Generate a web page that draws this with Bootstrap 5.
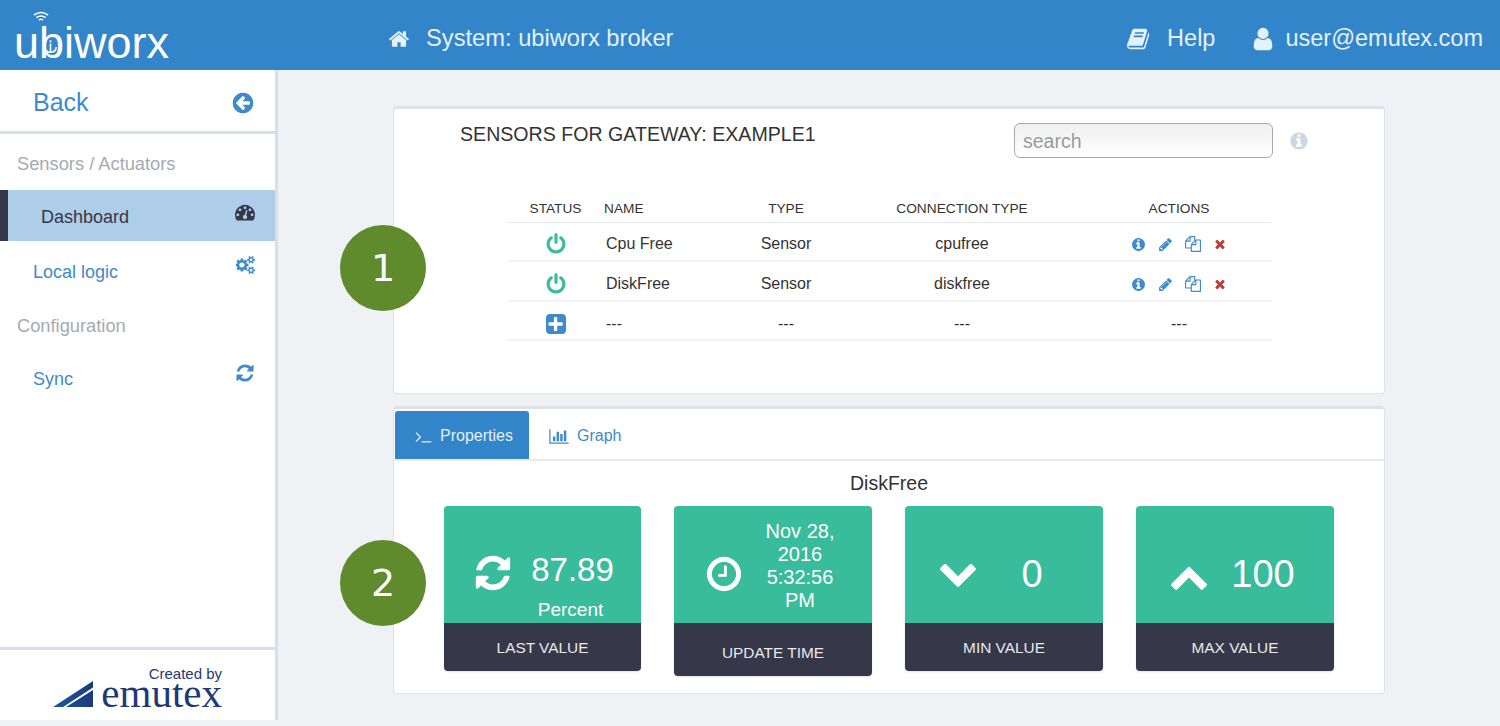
<!DOCTYPE html>
<html lang="en">
<head>
    <meta charset="UTF-8">
    <meta name="viewport" content="width=device-width, initial-scale=1">
    <title>ubiworx broker</title>
    <link href="https://cdn.jsdelivr.net/npm/bootstrap@5.3.0/dist/css/bootstrap.min.css" rel="stylesheet">
    <style>
        html, body { height: 726px; overflow: hidden; }
        body { background: #eef2f5; font-family: "Liberation Sans", Arial, sans-serif; color: #333; }
        .ico { display: block; fill: currentColor; flex: none; }

        /* Barra superior */
        .top-bar { height: 70px; background: #3385c9; color: #e4f0fa; padding: 7px 17px 0 15px; font-size: 23.5px; flex-wrap: nowrap; }
        .top-system { font-size: 23.7px; }
        .logo-box { width: 373px; height: 63px; position: relative; }
        .logo-text { position: absolute; left: -1px; top: 10px; font-size: 45px; line-height: 52px; color: #fff; }
        .logo-wifi { position: absolute; left: 17px; top: 4px; }
        .logo-anchor { position: absolute; left: 28px; top: 32px; }
        .top-help { margin-right: 35px; }
        .user-ico { margin-right: 9px; }

        /* Barra lateral */
        .side-bar { width: 278px; height: 650px; background: #fff; border-right: 3px solid #d5e0e8; }
        .side-back { height: 64px; border-bottom: 3px solid #d5e0e8; padding: 4px 20px 0 33px; font-size: 25px; color: #3f8acb; }
        .side-head { height: 53px; padding: 3px 0 0 17px; font-size: 18.3px; color: #a3abb3; }
        .side-first { height: 56px; }
        .side-link { height: 53px; padding: 0 20px 0 33px; font-size: 18px; color: #3f8acb; }
        .side-link .ico { margin-top: -8px; }
        .side-cogs { padding-right: 18px; padding-top: 1px; }
        .side-link.side-cogs .ico { margin-top: -15px; }
        .side-sync { height: 54px; margin-top: 1px; }
        .side-link.side-sync .ico { margin-top: -12px; }
        .side-active { height: 51px; margin-bottom: 4px; background: #aecde9; border-left: 8px solid #36384a; padding-left: 33px; color: #36384a; }
        .side-active span { margin-top: 3px; }
        .side-foot { height: 73px; border-top: 3px solid #d5e0e8; padding: 16px 53px 0 0; color: #1c3a75; }
        .made-by { font-size: 15px; line-height: 15px; text-align: right; }
        .made-wedge { margin-top: 0; }
        .made-name { font-family: "Liberation Serif", "Times New Roman", serif; font-size: 41px; line-height: 24px; }

        /* Paneles */
        .main-area { padding: 36px 0 0 115px; }
        .panel-box { width: 992px; height: 288px; margin-bottom: 12px; border: 1px solid #dde3e8; border-top-width: 3px; border-radius: 4px; background: #fff; position: relative; }
        .panel-title { position: absolute; left: 66px; top: 12px; font-size: 19.6px; line-height: 26px; }
        .search-box { width: 259px; height: 35px; padding: 2px 8px 0; border: 1px solid #aaa; border-radius: 6px; background: linear-gradient(#f0f0f0, #fff); font-size: 19.5px; color: #333; }
        .search-box::placeholder { color: #9a9a9a; }
        .search-row { padding: 14px 0 0 620px; }
        .search-row .ico { color: #c9d8e3; margin-left: 16px; }
        .sensor-wrap { width: 764px; margin: 40px 0 0 113px; }
        .sensor-table { table-layout: fixed; margin: 0; font-size: 16px; }
        .sensor-table th { height: 24px; padding: 0; font-size: 13.7px; font-weight: 400; text-align: center; color: #333; border-bottom: 1px solid #e6e9ec; vertical-align: middle; }
        .sensor-table td { height: 39px; padding: 6px 0 0; text-align: center; color: #333; border-bottom: 2px solid #f1f3f5; vertical-align: middle; }
        .sensor-table tbody tr:nth-child(2) td { height: 40px; }
        .sensor-table .cell-left { text-align: left; padding-left: 2px; }
        .sensor-table .head-left { text-align: left; }
        .sensor-table .cell-act { padding-left: 6px; }
        .green-ico { color: #38bc9c; }
        .blue-ico { color: #3f8acb; }
        .red-ico { color: #b8403a; }
        .act-row { gap: 12px; }

        /* Pestañas */
        .tab-row { height: 50px; margin: 2px 0 0 1px; border-bottom: 2px solid #e9ecef; flex-wrap: nowrap; }
        .tab-item { height: 48px; padding: 2px 17px 0 20px; font-size: 16px; color: #3f8acb; border-radius: 3px 3px 0 0; }
        .tab-on { width: 134px; background: #3385c9; color: #e4f0fa; }
        .metric-name { height: 45px; padding-top: 10px; font-size: 19.5px; line-height: 24px; text-align: center; }
        .metric-row { padding-left: 50px; gap: 33px; align-items: flex-start; }
        .metric-box { width: 198px; border-radius: 4px; overflow: hidden; box-shadow: 0 1px 2px rgba(0,0,0,.12); }
        .metric-box:first-child { width: 197px; }
        .metric-top { height: 117px; background: #38bc9c; color: #fff; position: relative; }
        .metric-label { height: 48px; padding-top: 2px; background: #36384a; color: #e8e8ea; font-size: 15.4px; }
        .label-tall { height: 53px; padding-top: 7px; }
        .metric-ico { position: absolute; }
        .ico-sync { left: 29px; top: 47px; }
        .ico-clock { left: 30px; top: 48px; }
        .ico-down { left: 33px; top: 46px; }
        .ico-up { left: 33px; top: 50px; }
        .metric-num { position: absolute; left: 60px; right: 0; text-align: center; top: 42px; line-height: 44px; }
        .num-small { font-size: 33px; }
        .num-big { font-size: 38px; top: 46px; left: 56px; }
        .metric-unit { position: absolute; left: 56px; right: 0; top: 92px; font-size: 19px; line-height: 24px; text-align: center; }
        .metric-date { position: absolute; left: 71px; width: 110px; top: 14px; font-size: 20px; line-height: 23px; text-align: center; }

        /* Marcas numeradas sobre los paneles */
        .num-mark { position: absolute; left: -54px; top: 116px; width: 86px; height: 86px; border-radius: 50%; background: #5f8b2d; color: #fff; font-family: "DejaVu Sans", sans-serif; font-size: 38px; }
        .mark-two { top: 131px; }
    </style>
</head>
<body>

<svg width="0" height="0" class="position-absolute">
    <symbol id="i-home" viewBox="0 0 1792 1792"><path d="M1472 992v480q0 26-19 45t-45 19h-384v-384h-256v384h-384q-26 0-45-19t-19-45v-480q0-1 .5-3t.5-3l575-474 575 474q1 2 1 6zm223-69l-62 74q-8 9-21 11h-3q-13 0-21-7l-692-577-692 577q-12 8-24 7-13-2-21-11l-62-74q-8-10-7-23.500t11-21.500l719-599q32-26 76-26t76 26l244 204v-195q0-14 9-23t23-9h192q14 0 23 9t9 23v408l219 182q10 8 11 21.500t-7 23.500z"/></symbol>
    <symbol id="i-book" viewBox="0 0 1792 1792"><path d="M1639 478q40 57 18 129l-275 906q-19 64-76.500 107.500t-122.500 43.500h-923q-77 0-148.500-53.500t-99.500-131.500q-24-67-2-127 0-4 3-27t4-37q1-8-3-21.500t-3-19.500q2-11 8-21t16.500-23.500 16.500-23.500q23-38 45-91.500t30-91.500q3-10 .5-30t-.5-28q3-11 17-28t17-23q21-36 42-92t25-90q1-9-2.500-32t.5-28q4-13 22-30.500t22-22.500q19-26 42.500-84.500t27.500-96.500q1-8-3-25.500t-2-26.500q2-8 9-18t18-23 17-21q8-12 16.500-30.500t15-35 16-36 19.500-32 26.500-23.500 36-11.500 47.500 5.500l-1 3q38-9 51-9h761q74 0 114 56t18 130l-274 906q-36 119-71.500 153.500t-128.500 34.500h-869q-27 0-38 15-11 16-1 43 24 70 144 70h923q29 0 56-15.500t35-41.500l300-987q7-22 5-57 38 15 59 43zm-1064 2q-4 13 2 22.500t20 9.500h608q13 0 25.500-9.500t16.500-22.500l21-64q4-13-2-22.500t-20-9.500h-608q-13 0-25.500 9.500t-16.500 22.500zm-83 256q-4 13 2 22.500t20 9.500h608q13 0 25.500-9.500t16.500-22.500l21-64q4-13-2-22.500t-20-9.500h-608q-13 0-25.500 9.500t-16.500 22.500z"/></symbol>
    <symbol id="i-user" viewBox="0 0 1792 1792"><path d="M1536 1399q0 109-62.500 187t-150.500 78h-854q-88 0-150.500-78t-62.500-187q0-85 8.500-160.500t31.500-152 58.500-131 94-89 134.500-34.500q131 128 313 128t313-128q76 0 134.500 34.500t94 89 58.500 131 31.500 152 8.500 160.500zm-256-887q0 159-112.500 271.500t-271.500 112.500-271.500-112.500-112.500-271.500 112.500-271.500 271.500-112.500 271.500 112.500 112.500 271.500z"/></symbol>
    <symbol id="i-back" viewBox="0 0 1792 1792"><path d="M1408 960v-128q0-26-19-45t-45-19h-502l189-189q19-19 19-45t-19-45l-91-91q-18-18-45-18t-45 18l-362 362-91 91q-18 18-18 45t18 45l91 91 362 362q18 18 45 18t45-18l91-91q18-18 18-45t-18-45l-189-189h502q26 0 45-19t19-45zm256-64q0 209-103 385.500t-279.500 279.500-385.500 103-385.500-103-279.500-279.500-103-385.500 103-385.500 279.500-279.500 385.500-103 385.500 103 279.500 279.500 103 385.500z"/></symbol>
    <symbol id="i-gauge" viewBox="0 0 1792 1792"><path d="M384 1152q0-53-37.500-90.500t-90.500-37.500-90.500 37.500-37.500 90.500 37.500 90.500 90.500 37.500 90.500-37.500 37.500-90.500zm192-448q0-53-37.500-90.500t-90.500-37.500-90.500 37.500-37.500 90.500 37.500 90.500 90.500 37.500 90.500-37.500 37.500-90.500zm428 481l101-382q6-26-7.500-48.500t-38.500-29.500-48 6.500-30 39.500l-101 382q-60 5-107 43.500t-63 98.500q-20 77 20 146t117 89 146-20 89-117q16-60-6-117t-72-91zm660-33q0-53-37.500-90.500t-90.500-37.500-90.500 37.500-37.500 90.500 37.500 90.500 90.500 37.500 90.500-37.500 37.500-90.500zm-640-640q0-53-37.500-90.500t-90.500-37.500-90.500 37.500-37.500 90.500 37.500 90.500 90.500 37.500 90.500-37.500 37.500-90.500zm448 192q0-53-37.500-90.500t-90.500-37.500-90.500 37.500-37.500 90.500 37.500 90.500 90.500 37.500 90.500-37.500 37.500-90.500zm320 448q0 261-141 483-19 29-54 29h-1402q-35 0-54-29-141-221-141-483 0-182 71-348t191-286 286-191 348-71 348 71 286 191 191 286 71 348z"/></symbol>
    <symbol id="i-cogs" viewBox="0 0 2048 1792"><path d="M832 896q0-106-75-181t-181-75-181 75-75 181 75 181 181 75 181-75 75-181zm768 512q0-52-38-90t-90-38-90 38-38 90q0 53 37.500 90.500t90.500 37.500 90.500-37.500 37.500-90.500zm0-1024q0-52-38-90t-90-38-90 38-38 90q0 53 37.500 90.500t90.500 37.500 90.500-37.500 37.500-90.500zm-384 421v185q0 10-7 19.500t-16 10.500l-155 24q-11 35-32 76 34 48 90 115 7 11 7 20 0 12-7 19-23 30-82.500 89.500t-78.500 59.500q-11 0-21-7l-115-90q-37 19-77 31-11 108-23 155-7 24-30 24h-186q-11 0-20-7.500t-10-17.500l-23-153q-34-10-75-31l-118 89q-7 7-20 7-11 0-21-8-144-133-144-160 0-9 7-19 10-14 41-53t47-61q-23-44-35-82l-152-24q-10-1-17-9.500t-7-19.500v-185q0-10 7-19.500t16-10.500l155-24q11-35 32-76-34-48-90-115-7-11-7-20 0-12 7-20 22-30 82-89t79-59q11 0 21 7l115 90q34-18 77-32 11-108 23-154 7-24 30-24h186q11 0 20 7.500t10 17.500l23 153q34 10 75 31l118-89q8-7 20-7 11 0 21 8 144 133 144 160 0 8-7 19-12 16-42 54t-45 60q23 48 34 82l152 23q10 2 17 10.500t7 19.500zm640 533v140q0 16-149 31-12 27-30 52 51 113 51 138 0 4-4 7-122 71-124 71-8 0-46-47t-52-68q-20 2-30 2t-30-2q-14 21-52 68t-46 47q-2 0-124-71-4-3-4-7 0-25 51-138-18-25-30-52-149-15-149-31v-140q0-16 149-31 13-29 30-52-51-113-51-138 0-4 4-7 4-2 35-20t59-34 30-16q8 0 46 46.500t52 67.500q20-2 30-2t30 2q51-71 92-112l6-2q4 0 124 70 4 3 4 7 0 25-51 138 17 23 30 52 149 15 149 31zm0-1024v140q0 16-149 31-12 27-30 52 51 113 51 138 0 4-4 7-122 71-124 71-8 0-46-47t-52-68q-20 2-30 2t-30-2q-14 21-52 68t-46 47q-2 0-124-71-4-3-4-7 0-25 51-138-18-25-30-52-149-15-149-31v-140q0-16 149-31 13-29 30-52-51-113-51-138 0-4 4-7 4-2 35-20t59-34 30-16q8 0 46 46.500t52 67.500q20-2 30-2t30 2q51-71 92-112l6-2q4 0 124 70 4 3 4 7 0 25-51 138 17 23 30 52 149 15 149 31z"/></symbol>
    <symbol id="i-sync" viewBox="0 0 1792 1792"><path d="M1639 1056q0 5-1 7-64 268-268 434.500t-478 166.500q-146 0-282.500-55t-243.500-157l-129 129q-19 19-45 19t-45-19-19-45v-448q0-26 19-45t45-19h448q26 0 45 19t19 45-19 45l-137 137q71 66 161 102t187 36q134 0 250-65t186-179q11-17 53-117 8-23 30-23h192q13 0 22.500 9.500t9.500 22.500zm25-800v448q0 26-19 45t-45 19h-448q-26 0-45-19t-19-45 19-45l138-138q-148-137-349-137-134 0-250 65t-186 179q-11 17-53 117-8 23-30 23h-199q-13 0-22.500-9.500t-9.500-22.500v-7q65-268 270-434.500t480-166.500q146 0 284 55.500t245 156.500l130-129q19-19 45-19t45 19 19 45z"/></symbol>
    <symbol id="i-info" viewBox="0 0 1792 1792"><path d="M1152 1376v-160q0-14-9-23t-23-9h-96v-512q0-14-9-23t-23-9h-320q-14 0-23 9t-9 23v160q0 14 9 23t23 9h96v320h-96q-14 0-23 9t-9 23v160q0 14 9 23t23 9h448q14 0 23-9t9-23zm-128-896v-160q0-14-9-23t-23-9h-192q-14 0-23 9t-9 23v160q0 14 9 23t23 9h192q14 0 23-9t9-23zm640 416q0 209-103 385.500t-279.500 279.500-385.500 103-385.500-103-279.500-279.500-103-385.500 103-385.500 279.500-279.500 385.500-103 385.500 103 279.500 279.500 103 385.500z"/></symbol>
    <symbol id="i-power" viewBox="0 0 1792 1792"><path d="M1664 896q0 156-61 298t-164 245-245 164-298 61-298-61-245-164-164-245-61-298q0-182 80.500-343t226.500-270q43-32 95.500-25t83.500 50q32 42 24.500 94.500t-49.500 84.500q-98 74-151.500 181t-53.500 228q0 104 40.500 198.500t109.500 163.500 163.500 109.500 198.500 40.500 198.500-40.500 163.500-109.500 109.500-163.500 40.500-198.500q0-121-53.500-228t-151.500-181q-42-32-49.500-84.500t24.500-94.500q31-43 84-50t95 25q146 109 226.500 270t80.500 343zm-640-768v640q0 52-38 90t-90 38-90-38-38-90v-640q0-52 38-90t90-38 90 38 38 90z"/></symbol>
    <symbol id="i-plus" viewBox="0 0 1536 1536"><path d="M1280 832v-128q0-26-19-45t-45-19h-352v-352q0-26-19-45t-45-19h-128q-26 0-45 19t-19 45v352h-352q-26 0-45 19t-19 45v128q0 26 19 45t45 19h352v352q0 26 19 45t45 19h128q26 0 45-19t19-45v-352h352q26 0 45-19t19-45zm256-544v960q0 119-84.500 203.500t-203.500 84.500h-960q-119 0-203.500-84.500t-84.500-203.500v-960q0-119 84.500-203.500t203.500-84.500h960q119 0 203.500 84.500t84.500 203.500z"/></symbol>
    <symbol id="i-pencil" viewBox="0 0 1792 1792"><path d="M491 1536l91-91-235-235-91 91v107h128v128h107zm523-928q0-22-22-22-10 0-17 7l-542 542q-7 7-7 17 0 22 22 22 10 0 17-7l542-542q7-7 7-17zm-54-192l416 416-832 832h-416v-416zm683 96q0 53-37 90l-166 166-416-416 166-165q36-38 90-38 53 0 91 38l235 234q37 39 37 91z"/></symbol>
    <symbol id="i-copy" viewBox="0 0 1792 1792"><path d="M1696 384q40 0 68 28t28 68v1216q0 40-28 68t-68 28h-960q-40 0-68-28t-28-68v-288h-544q-40 0-68-28t-28-68v-672q0-40 20-88t48-76l408-408q28-28 76-48t88-20h416q40 0 68 28t28 68v328q68-40 128-40h416zm-544 213l-299 299h299v-299zm-640-384l-299 299h299v-299zm196 647l316-316v-416h-384v416q0 40-28 68t-68 28h-416v640h512v-256q0-40 20-88t48-76zm956 804v-1152h-384v416q0 40-28 68t-68 28h-416v640h896z"/></symbol>
    <symbol id="i-times" viewBox="0 0 1792 1792"><path d="M1490 1322q0 40-28 68l-136 136q-28 28-68 28t-68-28l-294-294-294 294q-28 28-68 28t-68-28l-136-136q-28-28-28-68t28-68l294-294-294-294q-28-28-28-68t28-68l136-136q28-28 68-28t68 28l294 294 294-294q28-28 68-28t68 28l136 136q28 28 28 68t-28 68l-294 294 294 294q28 28 28 68z"/></symbol>
    <symbol id="i-term" viewBox="0 0 1792 1792"><path d="M649 983l-466 466q-10 10-23 10t-23-10l-50-50q-10-10-10-23t10-23l393-393-393-393q-10-10-10-23t10-23l50-50q10-10 23-10t23 10l466 466q10 10 10 23t-10 23zm1079 457v64q0 14-9 23t-23 9h-960q-14 0-23-9t-9-23v-64q0-14 9-23t23-9h960q14 0 23 9t9 23z"/></symbol>
    <symbol id="i-bars" viewBox="0 0 2048 1792"><path d="M640 896v512h-256v-512h256zm384-512v1024h-256v-1024h256zm1024 1152v128h-2048v-1536h128v1408h1920zm-640-896v768h-256v-768h256zm384-384v1152h-256v-1152h256z"/></symbol>
    <symbol id="i-clock" viewBox="0 0 1792 1792"><path d="M1024 544v448q0 14-9 23t-23 9h-320q-14 0-23-9t-9-23v-64q0-14 9-23t23-9h224v-352q0-14 9-23t23-9h64q14 0 23 9t9 23zm416 352q0-148-73-273t-198-198-273-73-273 73-198 198-73 273 73 273 198 198 273 73 273-73 198-198 73-273zm224 0q0 209-103 385.500t-279.500 279.500-385.500 103-385.500-103-279.500-279.500-103-385.500 103-385.500 279.500-279.500 385.500-103 385.500 103 279.500 279.500 103 385.500z"/></symbol>
    <symbol id="i-down" viewBox="0 0 1792 1792"><path d="M1683 808l-742 741q-19 19-45 19t-45-19l-742-741q-19-19-19-45.500t19-45.500l166-165q19-19 45-19t45 19l531 531 531-531q19-19 45-19t45 19l166 165q19 19 19 45.500t-19 45.500z"/></symbol>
    <symbol id="i-up" viewBox="0 0 1792 1792"><path d="M1683 1331l-166 165q-19 19-45 19t-45-19l-531-531-531 531q-19 19-45 19t-45-19l-166-165q-19-19-19-45.500t19-45.500l742-741q19-19 45-19t45 19l742 741q19 19 19 45.500t-19 45.500z"/></symbol>
</svg>

<nav class="navbar top-bar d-flex align-items-center">
    <div class="logo-box flex-shrink-0">
        <span class="logo-text">ubiworx</span>
        <svg class="logo-wifi" width="18" height="16" viewBox="0 0 18 16" fill="none" stroke="#fff" stroke-width="1.6">
            <path d="M2 4 Q9 -1 16 4"/><path d="M4.500 6.500 Q9 3.500 13.500 6.500"/><path d="M7 9 Q9 7.500 11 9"/>
        </svg>
        <svg class="logo-anchor" width="15" height="15" viewBox="0 0 13 13" fill="none" stroke="#fff" stroke-width="1.4">
            <path d="M6.500 4v7M1.500 7 Q2 11.500 6.500 11.500 T11.500 7"/><circle cx="6.500" cy="2" r="1" fill="#fff" stroke="none"/>
        </svg>
    </div>
    <svg class="ico" width="22" height="22"><use href="#i-home"/></svg>
    <span class="ms-3 flex-grow-1 top-system">System: ubiworx broker</span>
    <svg class="ico" width="24" height="24"><use href="#i-book"/></svg>
    <span class="ms-3 top-help">Help</span>
    <svg class="ico user-ico" width="26" height="26"><use href="#i-user"/></svg>
    <span>user@emutex.com</span>
</nav>

<div class="d-flex">
    <aside class="side-bar d-flex flex-column flex-shrink-0">
        <div class="side-back d-flex align-items-center justify-content-between">
            <span>Back</span>
            <svg class="ico" width="24" height="24"><use href="#i-back"/></svg>
        </div>
        <div class="side-head side-first d-flex align-items-center">Sensors / Actuators</div>
        <div class="side-link side-active d-flex align-items-center justify-content-between">
            <span>Dashboard</span>
            <svg class="ico" width="20" height="20"><use href="#i-gauge"/></svg>
        </div>
        <div class="side-link side-cogs d-flex align-items-center justify-content-between">
            <span>Local logic</span>
            <svg class="ico" width="21" height="20"><use href="#i-cogs"/></svg>
        </div>
        <div class="side-head d-flex align-items-center">Configuration</div>
        <div class="side-link side-sync d-flex align-items-center justify-content-between">
            <span>Sync</span>
            <svg class="ico" width="20" height="20"><use href="#i-sync"/></svg>
        </div>
        <div class="side-foot mt-auto d-flex flex-column align-items-end">
            <div class="made-by">Created by</div>
            <div class="d-flex align-items-start gap-2">
                <svg class="made-wedge" width="40" height="26" viewBox="0 0 40 26">
                    <defs><linearGradient id="wedge" x1="0" x2="1"><stop offset="0" stop-color="#1c5aa5"/><stop offset="1" stop-color="#1b3a7a"/></linearGradient></defs>
                    <path d="M0 26 L40 0 V6.500 L10 26Z M13 26 L40 9 V26Z" fill="url(#wedge)"/>
                </svg>
                <span class="made-name">emutex</span>
            </div>
        </div>
    </aside>

    <main class="main-area flex-grow-1">
        <section class="panel-box">
            <div class="num-mark d-flex align-items-center justify-content-center">1</div>
            <div class="panel-title">SENSORS FOR GATEWAY: EXAMPLE1</div>
            <div class="search-row d-flex align-items-center">
                <input class="search-box" type="text" placeholder="search">
                <svg class="ico" width="20" height="20"><use href="#i-info"/></svg>
            </div>
            <div class="sensor-wrap">
                <table class="table sensor-table">
                    <colgroup><col style="width:97px"><col style="width:125px"><col style="width:114px"><col style="width:238px"><col style="width:190px"></colgroup>
                    <thead>
                        <tr><th>STATUS</th><th class="head-left">NAME</th><th>TYPE</th><th>CONNECTION TYPE</th><th class="cell-act">ACTIONS</th></tr>
                    </thead>
                    <tbody>
                        <tr>
                            <td><svg class="ico green-ico mx-auto" width="22" height="22"><use href="#i-power"/></svg></td>
                            <td class="cell-left">Cpu Free</td><td>Sensor</td><td>cpufree</td>
                            <td class="cell-act"><div class="act-row d-flex justify-content-center align-items-center">
                                <svg class="ico blue-ico" width="15" height="15"><use href="#i-info"/></svg>
                                <svg class="ico blue-ico" width="15" height="15"><use href="#i-pencil"/></svg>
                                <svg class="ico blue-ico" width="16" height="16"><use href="#i-copy"/></svg>
                                <svg class="ico red-ico" width="14" height="14"><use href="#i-times"/></svg>
                            </div></td>
                        </tr>
                        <tr>
                            <td><svg class="ico green-ico mx-auto" width="22" height="22"><use href="#i-power"/></svg></td>
                            <td class="cell-left">DiskFree</td><td>Sensor</td><td>diskfree</td>
                            <td class="cell-act"><div class="act-row d-flex justify-content-center align-items-center">
                                <svg class="ico blue-ico" width="15" height="15"><use href="#i-info"/></svg>
                                <svg class="ico blue-ico" width="15" height="15"><use href="#i-pencil"/></svg>
                                <svg class="ico blue-ico" width="16" height="16"><use href="#i-copy"/></svg>
                                <svg class="ico red-ico" width="14" height="14"><use href="#i-times"/></svg>
                            </div></td>
                        </tr>
                        <tr>
                            <td><svg class="ico blue-ico mx-auto" width="20" height="20"><use href="#i-plus"/></svg></td>
                            <td class="cell-left">---</td><td>---</td><td>---</td><td class="cell-act">---</td>
                        </tr>
                    </tbody>
                </table>
            </div>
        </section>

        <section class="panel-box">
            <div class="num-mark mark-two d-flex align-items-center justify-content-center">2</div>
            <div class="tab-row d-flex">
                <div class="tab-item tab-on d-flex align-items-center gap-2">
                    <svg class="ico" width="17" height="17"><use href="#i-term"/></svg><span>Properties</span>
                </div>
                <div class="tab-item d-flex align-items-center gap-2">
                    <svg class="ico" width="20" height="17"><use href="#i-bars"/></svg><span>Graph</span>
                </div>
            </div>
            <div class="metric-name">DiskFree</div>
            <div class="metric-row d-flex">
                <div class="metric-box">
                    <div class="metric-top">
                        <svg class="ico metric-ico ico-sync" width="40" height="40"><use href="#i-sync"/></svg>
                        <div class="metric-num num-small">87.89</div>
                        <div class="metric-unit">Percent</div>
                    </div>
                    <div class="metric-label d-flex align-items-center justify-content-center">LAST VALUE</div>
                </div>
                <div class="metric-box">
                    <div class="metric-top">
                        <svg class="ico metric-ico ico-clock" width="40" height="40"><use href="#i-clock"/></svg>
                        <div class="metric-date">Nov 28, 2016<br>5:32:56<br>PM</div>
                    </div>
                    <div class="metric-label label-tall d-flex align-items-center justify-content-center">UPDATE TIME</div>
                </div>
                <div class="metric-box">
                    <div class="metric-top">
                        <svg class="ico metric-ico ico-down" width="40" height="40"><use href="#i-down"/></svg>
                        <div class="metric-num num-big">0</div>
                    </div>
                    <div class="metric-label d-flex align-items-center justify-content-center">MIN VALUE</div>
                </div>
                <div class="metric-box">
                    <div class="metric-top">
                        <svg class="ico metric-ico ico-up" width="40" height="40"><use href="#i-up"/></svg>
                        <div class="metric-num num-big">100</div>
                    </div>
                    <div class="metric-label d-flex align-items-center justify-content-center">MAX VALUE</div>
                </div>
            </div>
        </section>
    </main>
</div>

<script src="https://cdn.jsdelivr.net/npm/bootstrap@5.3.0/dist/js/bootstrap.bundle.min.js"></script>
</body>
</html>
